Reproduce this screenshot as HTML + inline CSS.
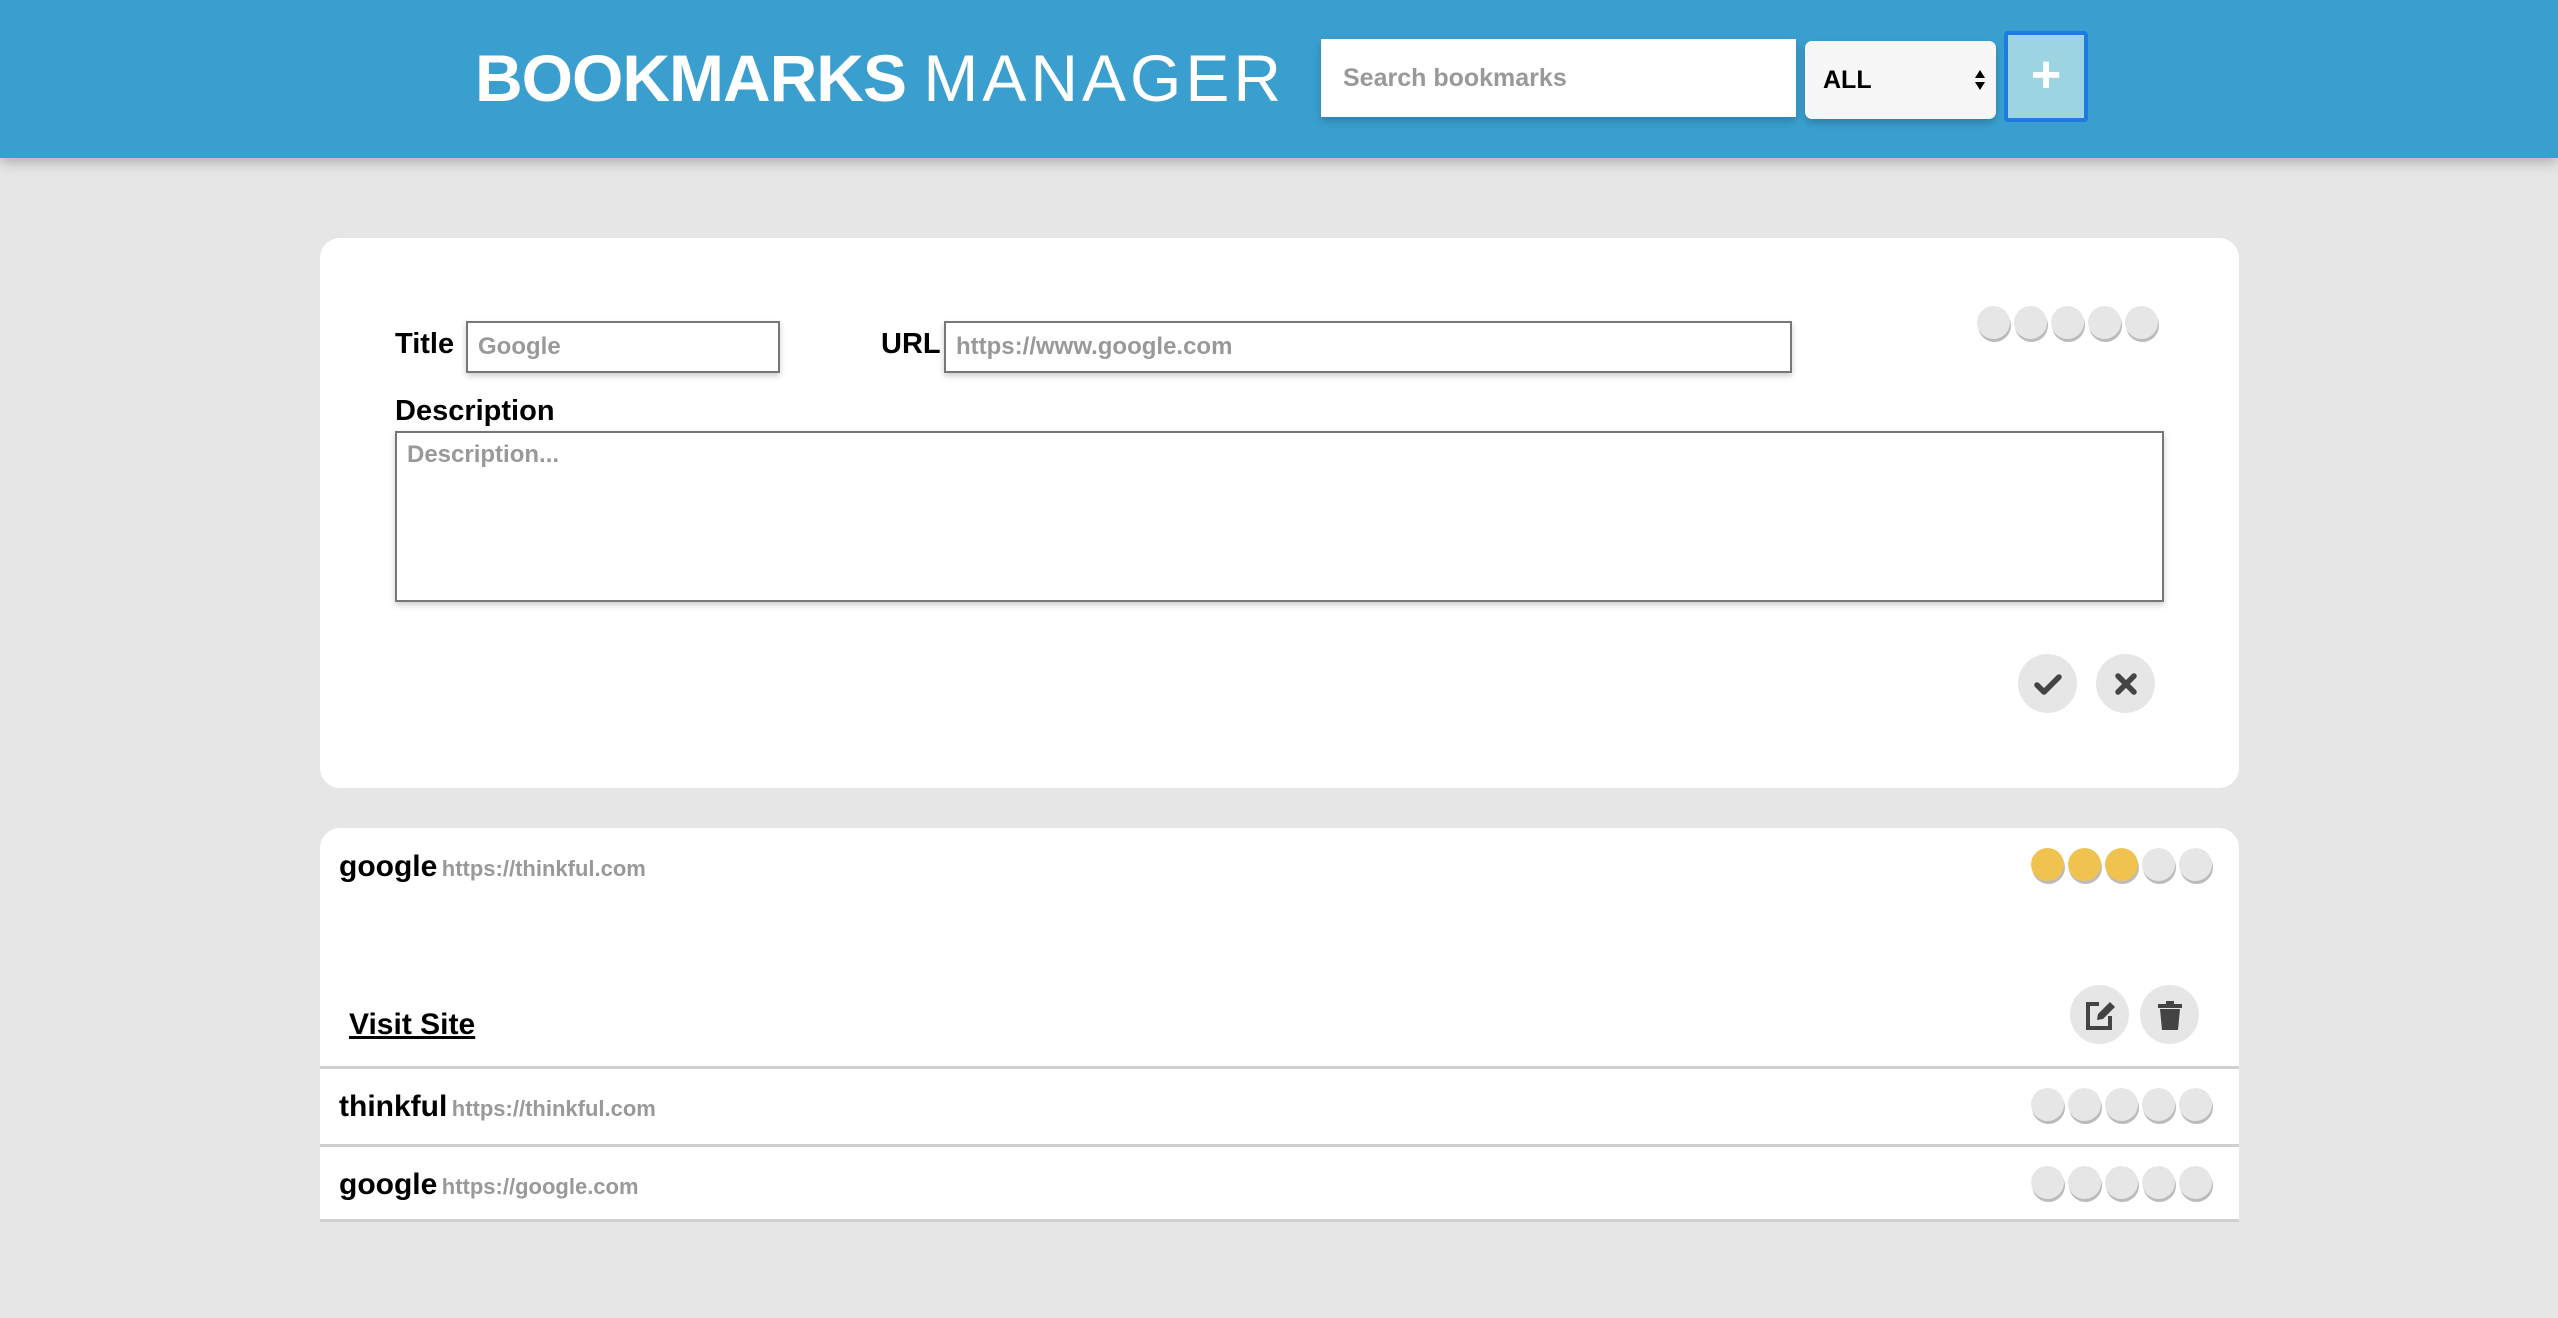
<!DOCTYPE html>
<html><head><meta charset="utf-8"><style>
*{box-sizing:border-box;margin:0;padding:0}
body{width:2558px;height:1318px;background:#e6e6e6;font-family:"Liberation Sans",sans-serif;position:relative;overflow:hidden}
.hdr{position:absolute;left:0;top:0;width:2558px;height:158px;background:#3a9fcf;box-shadow:0 4px 12px rgba(0,0,0,.25)}
.abs{position:absolute}
.logo{left:475px;top:38px;color:#fff;font-size:66px;line-height:80px;white-space:nowrap;letter-spacing:-1px}
.logo b{font-weight:bold}.logo span{font-weight:normal;letter-spacing:4px}
.search{left:1321px;top:39px;width:475px;height:78px;background:#fff;box-shadow:0 4px 8px rgba(0,0,0,.2);color:#999;font-size:25px;font-weight:bold;padding-left:22px;line-height:78px}
.sel{left:1805px;top:41px;width:191px;height:78px;background:#f7f7f7;border-radius:7px;box-shadow:0 4px 8px rgba(0,0,0,.2);font-size:25px;font-weight:bold;padding-left:18px;line-height:78px}
.plus{left:2004px;top:31px;width:84px;height:91px;background:#9dd4e1;border:4px solid #1e7be0;border-radius:4px;color:#fff;font-size:52px;font-weight:bold;text-align:center;line-height:80px}
.card{background:#fff;border-radius:20px}
.lbl{font-size:29px;font-weight:bold;color:#000}
.inp{border:2px solid #777;background:#fff;box-shadow:0 3px 6px rgba(0,0,0,.2);color:#999;font-size:24px;font-weight:bold;padding-left:10px}
.stars{display:flex;gap:4px}
.st{width:33px;height:33px;border-radius:50%;background:#e6e6e6;box-shadow:1px 3px 0 #bbb}
.st.y{background:#f0c350}
.rb{width:59px;height:59px;border-radius:50%;background:#e6e6e6;display:flex;align-items:center;justify-content:center}
.t{font-size:30px;font-weight:bold;color:#000}
.u{font-size:22px;font-weight:bold;color:#999}
.hr{height:3px;background:#d0d0d0;left:320px;width:1919px}
</style></head><body>
<div class="hdr"></div>
<div class="abs logo"><b>BOOKMARKS</b> <span>MANAGER</span></div>
<div class="abs search">Search bookmarks</div>
<div class="abs sel">ALL<svg style="position:absolute;right:10px;top:27px" width="12" height="24" viewBox="0 0 12 24"><path d="M6 2L11 10H1zM6 22L11 14H1z" fill="#000"/></svg></div>
<div class="abs plus">+</div>

<div class="abs card" style="left:320px;top:238px;width:1919px;height:550px"></div>
<div class="abs lbl" style="left:395px;top:328px">Title</div>
<div class="abs inp" style="left:466px;top:321px;width:314px;height:52px;line-height:48px">Google</div>
<div class="abs lbl" style="left:881px;top:328px">URL</div>
<div class="abs inp" style="left:944px;top:321px;width:848px;height:52px;line-height:48px">https://www.google.com</div>
<div class="abs stars" style="left:1977px;top:306px"><div class="st"></div><div class="st"></div><div class="st"></div><div class="st"></div><div class="st"></div></div>
<div class="abs lbl" style="left:395px;top:395px">Description</div>
<div class="abs inp" style="left:395px;top:431px;width:1769px;height:171px;padding-top:8px">Description...</div>
<div class="abs rb" style="left:2018px;top:654px"><svg width="30" height="30" viewBox="0 0 30 30"><path d="M4 16l7 7L26 8" stroke="#444" stroke-width="5.5" fill="none" stroke-linecap="round" stroke-linejoin="round"/></svg></div>
<div class="abs rb" style="left:2096px;top:654px"><svg width="26" height="26" viewBox="0 0 26 26"><path d="M5 5l16 16M21 5L5 21" stroke="#444" stroke-width="5.5" stroke-linecap="round"/></svg></div>

<div class="abs card" style="left:320px;top:828px;width:1919px;height:394px;border-radius:20px 20px 0 0;border-bottom:3px solid #d0d0d0"></div>
<div class="abs" style="left:339px;top:850px"><span class="t">google</span> <span class="u">https://thinkful.com</span></div>
<div class="abs stars" style="left:2031px;top:848px"><div class="st y"></div><div class="st y"></div><div class="st y"></div><div class="st"></div><div class="st"></div></div>
<div class="abs t" style="left:349px;top:1008px;text-decoration:underline">Visit Site</div>
<div class="abs rb" style="left:2070px;top:985px"><svg width="34" height="34" viewBox="0 0 34 34"><path d="M16 6H5v24h22V18" stroke="#444" stroke-width="4" fill="none"/><path d="M14 22l1-6 12-12 5 5-12 12z" fill="#444"/></svg></div>
<div class="abs rb" style="left:2140px;top:985px"><svg width="28" height="32" viewBox="0 0 28 32"><path d="M2 5h24v4H2zM10 2h8v3h-8zM4 10h20l-2 21H6z" fill="#444"/></svg></div>
<div class="abs hr" style="top:1066px"></div>
<div class="abs" style="left:339px;top:1090px"><span class="t">thinkful</span> <span class="u">https://thinkful.com</span></div>
<div class="abs stars" style="left:2031px;top:1088px"><div class="st"></div><div class="st"></div><div class="st"></div><div class="st"></div><div class="st"></div></div>
<div class="abs hr" style="top:1144px"></div>
<div class="abs" style="left:339px;top:1168px"><span class="t">google</span> <span class="u">https://google.com</span></div>
<div class="abs stars" style="left:2031px;top:1166px"><div class="st"></div><div class="st"></div><div class="st"></div><div class="st"></div><div class="st"></div></div>
</body></html>
